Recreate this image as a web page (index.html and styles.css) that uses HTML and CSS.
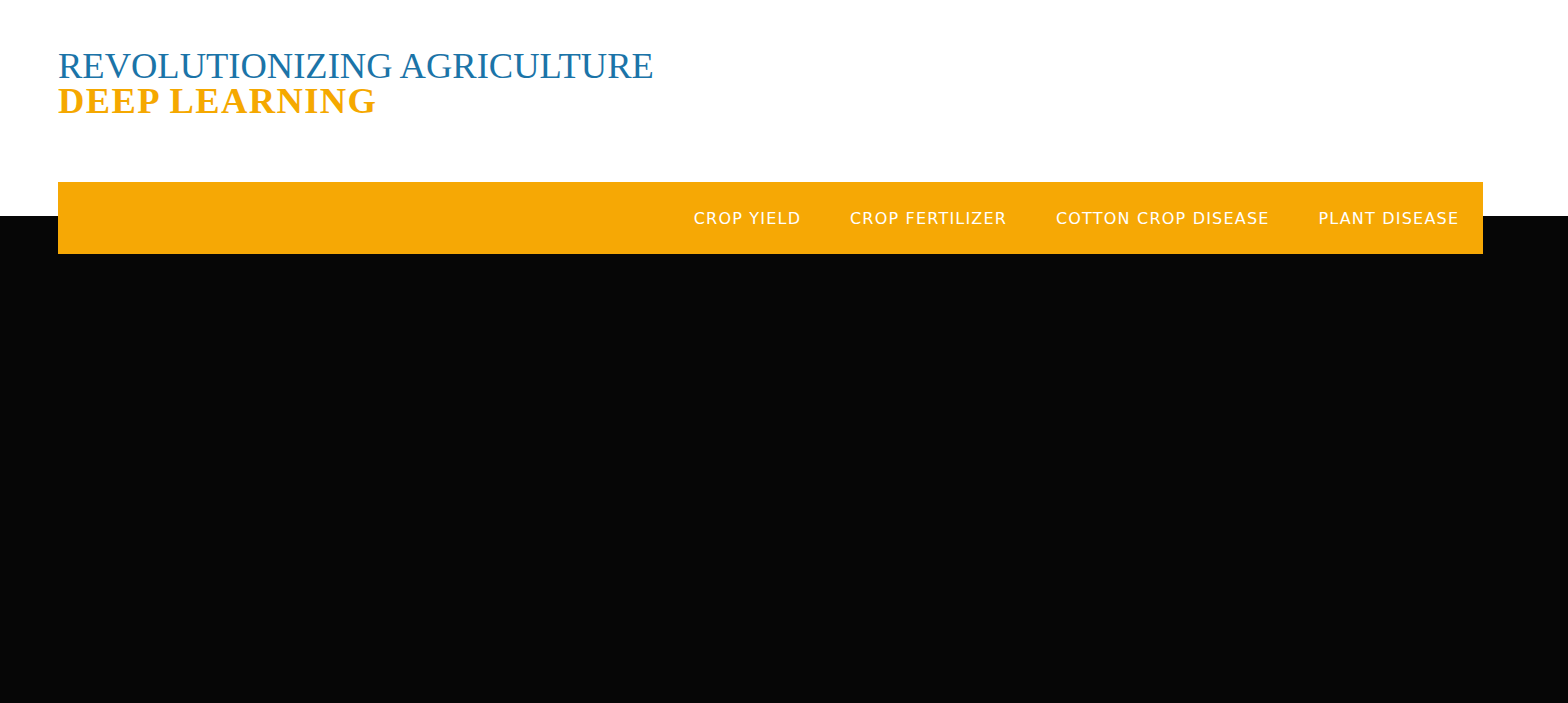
FILE: index.html
```html
<!DOCTYPE html>
<html lang="en">
<head>
<meta charset="utf-8">
<title>Revolutionizing Agriculture</title>
<link rel="stylesheet" href="styles.css">
</head>
<body>
<header class="site-header">
  <div class="brand">
    <h1 class="brand-title">REVOLUTIONIZING AGRICULTURE</h1>
    <h2 class="brand-sub">DEEP LEARNING</h2>
  </div>
  <nav class="main-nav">
    <ul class="nav-list">
      <li class="nav-item"><a href="#">CROP YIELD</a></li>
      <li class="nav-item"><a href="#">CROP FERTILIZER</a></li>
      <li class="nav-item"><a href="#">COTTON CROP DISEASE</a></li>
      <li class="nav-item"><a href="#">PLANT DISEASE</a></li>
    </ul>
  </nav>
</header>
<main class="hero"></main>
</body>
</html>
```
FILE: styles.css
```css
html, body {
  margin: 0;
  padding: 0;
}
body {
  min-height: 703px;
  background: linear-gradient(#ffffff 0, #ffffff 216px, #060606 216px, #060606 100%);
}
.site-header {
  padding: 0 85px 0 58px;
}
.brand {
  padding-top: 48px;
  height: 182px;
  box-sizing: border-box;
}
.brand-title,
.brand-sub {
  margin: 0;
  font-family: "Liberation Serif", "Times New Roman", serif;
  font-size: 36.5px;
  line-height: 35px;
}
.brand-title {
  font-weight: normal;
  color: #1b74a8;
}
.brand-sub {
  font-weight: bold;
  color: #f5a800;
  letter-spacing: 1.4px;
}
.main-nav {
  background: #f6a805;
  height: 72px;
  display: flex;
  justify-content: flex-end;
  align-items: center;
}
.nav-list {
  list-style: none;
  margin: 0;
  padding: 0;
  display: flex;
}
.nav-item a {
  display: block;
  padding: 1px 23.8px 0 25px;
  color: #ffffff;
  text-decoration: none;
  font-family: "DejaVu Sans", Verdana, sans-serif;
  font-size: 16px;
  line-height: 20px;
  letter-spacing: 1.2px;
}
.hero {
  display: block;
}
```
